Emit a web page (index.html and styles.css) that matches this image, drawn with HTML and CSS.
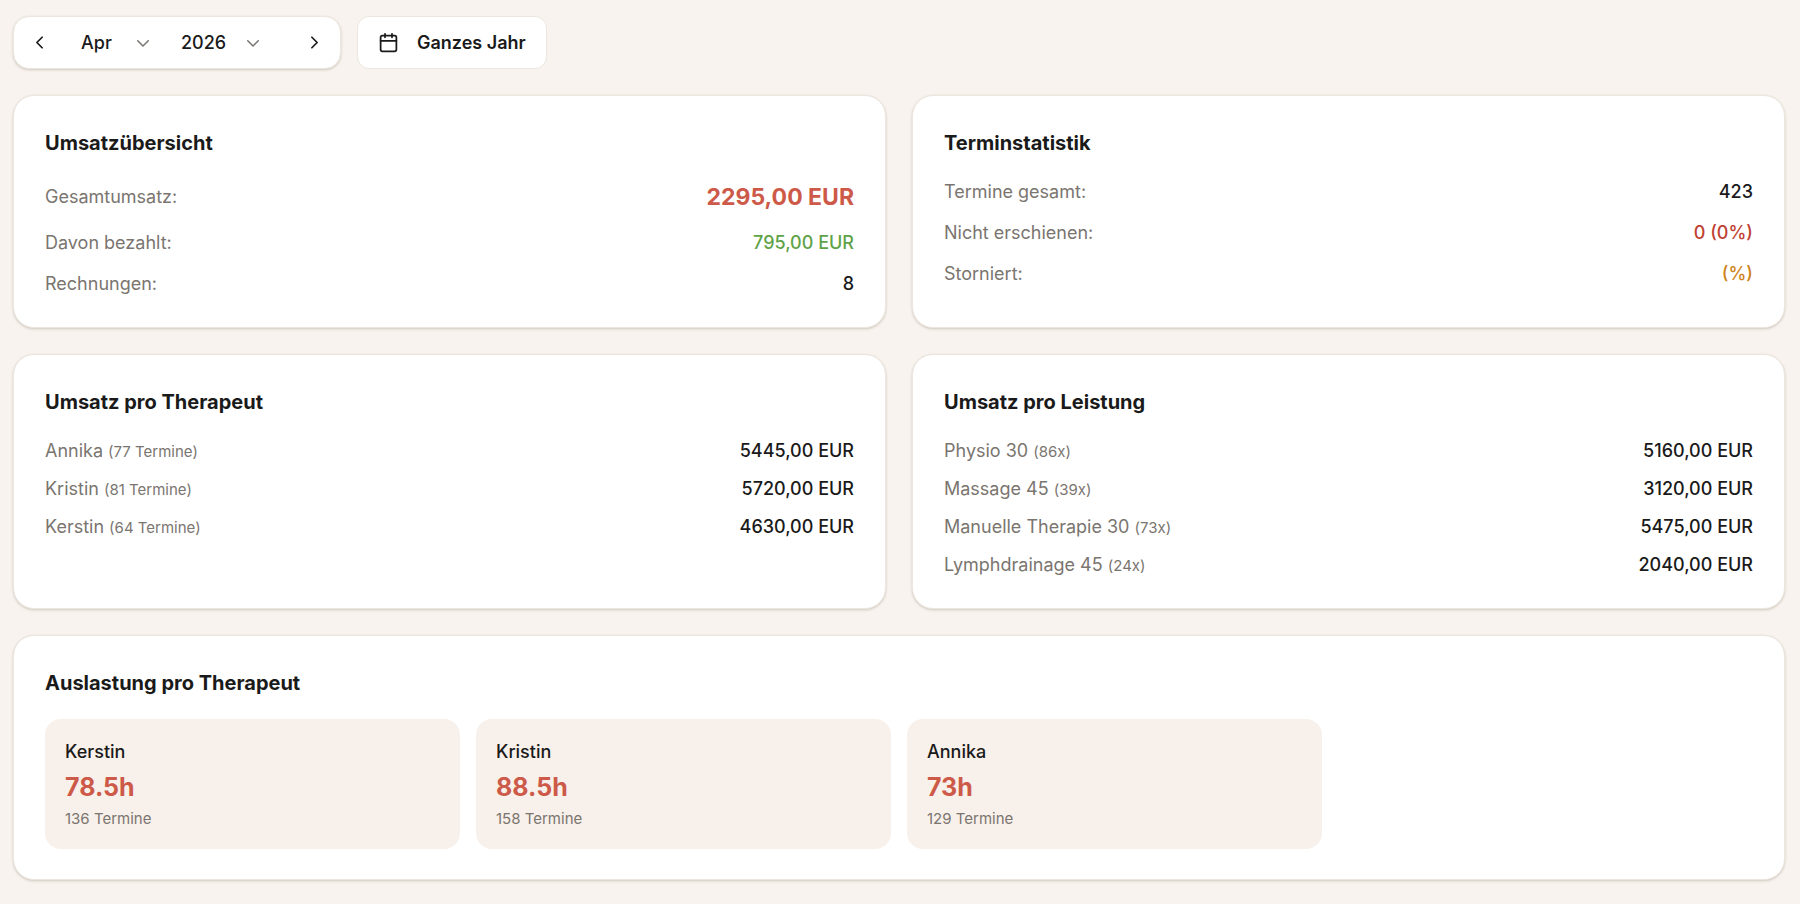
FILE: index.html
```html
<!DOCTYPE html>
<html lang="de">
<head>
<meta charset="utf-8">
<meta name="viewport" content="width=device-width, initial-scale=1">
<title>Statistik</title>
<link rel="stylesheet" href="styles.css">
</head>
<body>
<main class="page">
  <div class="toolbar">
    <div class="period">
      <button class="step" type="button" aria-label="Vorheriger Monat">
        <svg class="icon" viewBox="0 0 24 24"><path d="m15 18-6-6 6-6"/></svg>
      </button>
      <div class="picker picker-month">
        <select class="picker-select" aria-label="Monat"><option>Apr</option></select>
        <svg class="picker-arrow" viewBox="0 0 24 24"><path d="m5 9 7 7 7-7"/></svg>
      </div>
      <div class="picker picker-year">
        <select class="picker-select" aria-label="Jahr"><option>2026</option></select>
        <svg class="picker-arrow" viewBox="0 0 24 24"><path d="m5 9 7 7 7-7"/></svg>
      </div>
      <button class="step step-next" type="button" aria-label="Nächster Monat">
        <svg class="icon" viewBox="0 0 24 24"><path d="m9 18 6-6-6-6"/></svg>
      </button>
    </div>
    <button class="year-button" type="button">
      <svg class="icon" viewBox="0 0 24 24"><path d="M8 2v4M16 2v4M3 10h18"/><rect x="3" y="4" width="18" height="18" rx="2"/></svg>
      Ganzes Jahr
    </button>
  </div>

  <div class="cards">
    <section class="card">
      <h2 class="card-title">Umsatzübersicht</h2>
      <dl class="stats">
        <div class="row"><dt>Gesamtumsatz:</dt><dd class="total">2295,00 EUR</dd></div>
        <div class="row"><dt>Davon bezahlt:</dt><dd class="paid">795,00 EUR</dd></div>
        <div class="row"><dt>Rechnungen:</dt><dd>8</dd></div>
      </dl>
    </section>

    <section class="card">
      <h2 class="card-title">Terminstatistik</h2>
      <dl class="stats">
        <div class="row"><dt>Termine gesamt:</dt><dd>423</dd></div>
        <div class="row"><dt>Nicht erschienen:</dt><dd class="missed">0 (0%)</dd></div>
        <div class="row"><dt>Storniert:</dt><dd class="cancelled">(%)</dd></div>
      </dl>
    </section>

    <section class="card">
      <h2 class="card-title">Umsatz pro Therapeut</h2>
      <dl class="stats stats-dense">
        <div class="row"><dt>Annika <span class="count">(77 Termine)</span></dt><dd>5445,00 EUR</dd></div>
        <div class="row"><dt>Kristin <span class="count">(81 Termine)</span></dt><dd>5720,00 EUR</dd></div>
        <div class="row"><dt>Kerstin <span class="count">(64 Termine)</span></dt><dd>4630,00 EUR</dd></div>
      </dl>
    </section>

    <section class="card">
      <h2 class="card-title">Umsatz pro Leistung</h2>
      <dl class="stats stats-dense">
        <div class="row"><dt>Physio 30 <span class="count">(86x)</span></dt><dd>5160,00 EUR</dd></div>
        <div class="row"><dt>Massage 45 <span class="count">(39x)</span></dt><dd>3120,00 EUR</dd></div>
        <div class="row"><dt>Manuelle Therapie 30 <span class="count">(73x)</span></dt><dd>5475,00 EUR</dd></div>
        <div class="row"><dt>Lymphdrainage 45 <span class="count">(24x)</span></dt><dd>2040,00 EUR</dd></div>
      </dl>
    </section>

    <section class="card card-wide">
      <h2 class="card-title">Auslastung pro Therapeut</h2>
      <div class="tiles">
        <div class="tile"><p class="tile-name">Kerstin</p><p class="tile-hours">78.5h</p><p class="tile-count">136 Termine</p></div>
        <div class="tile"><p class="tile-name">Kristin</p><p class="tile-hours">88.5h</p><p class="tile-count">158 Termine</p></div>
        <div class="tile"><p class="tile-name">Annika</p><p class="tile-hours">73h</p><p class="tile-count">129 Termine</p></div>
      </div>
    </section>
  </div>
</main>
</body>
</html>
```

FILE: styles.css
```css
:root {
  --bg: #f8f3ee;
  --text: #1a1a1a;
  --muted: #7a756f;
  --accent: #cd5a48;
  --border: #ece6de;
  --shadow: 0 1px 3px rgba(60, 45, 30, 0.14), 0 1px 2px rgba(60, 45, 30, 0.08);
}

* {
  box-sizing: border-box;
}

body {
  margin: 0;
  background: var(--bg);
  color: var(--text);
  font-family: Inter, "Liberation Sans", sans-serif;
  font-size: 18px;
  line-height: 26px;
}

h2, p, dl, dd {
  margin: 0;
}

button, select {
  font: inherit;
  color: inherit;
}

.page {
  padding: 16px 15px 23px 13px;
}

.toolbar {
  display: flex;
  gap: 16px;
  margin-bottom: 26px;
}

.period {
  display: flex;
  align-items: center;
  gap: 5px;
  padding: 5px;
  background: #fff;
  border: 1px solid var(--border);
  border-radius: 16px;
  box-shadow: var(--shadow);
}

.icon {
  width: 21px;
  height: 21px;
  fill: none;
  stroke: currentColor;
  stroke-width: 2;
  stroke-linecap: round;
  stroke-linejoin: round;
}

.step {
  display: grid;
  place-items: center;
  width: 41px;
  height: 41px;
  padding: 0;
  background: none;
  border: 0;
  border-radius: 10px;
}

.step-next {
  margin-left: 19px;
}

.picker {
  position: relative;
}

.picker-month {
  width: 95px;
}

.picker-year {
  width: 105px;
}

.picker-select {
  appearance: none;
  width: 100%;
  height: 41px;
  padding: 0 30px 0 16px;
  background: none;
  border: 0;
  font-weight: 500;
}

.picker-arrow {
  position: absolute;
  top: 12px;
  right: 8px;
  width: 18px;
  height: 18px;
  fill: none;
  stroke: #77736f;
  stroke-width: 2;
  stroke-linecap: round;
  stroke-linejoin: round;
  pointer-events: none;
}

.year-button {
  display: flex;
  align-items: center;
  gap: 18px;
  padding: 0 20px;
  background: #fff;
  border: 1px solid var(--border);
  border-radius: 12px;
  font-weight: 600;
}

.cards {
  display: grid;
  grid-template-columns: repeat(2, 1fr);
  gap: 26px;
}

.card {
  padding: 31px 31px 30px;
  background: #fff;
  border: 1px solid var(--border);
  border-radius: 21px;
  box-shadow: var(--shadow);
}

.card-wide {
  grid-column: 1 / -1;
}

.card-title {
  margin-bottom: 20px;
  font-size: 20px;
  font-weight: 700;
  line-height: 32px;
}

.stats {
  display: flex;
  flex-direction: column;
  gap: 15px;
}

.stats-dense {
  gap: 12px;
}

.row {
  display: flex;
  align-items: center;
  justify-content: space-between;
}

.row dt {
  color: var(--muted);
}

.row dd {
  font-weight: 500;
}

.row .count {
  font-size: 15px;
  line-height: 20px;
}

.row .total {
  color: var(--accent);
  font-size: 23px;
  font-weight: 700;
  line-height: 36px;
}

.row .paid {
  color: #5fa349;
}

.row .missed {
  color: #bf4132;
}

.row .cancelled {
  color: #cf8420;
}

.tiles {
  display: grid;
  grid-template-columns: repeat(4, 1fr);
  gap: 16px;
}

.tile {
  display: flex;
  flex-direction: column;
  gap: 4px;
  padding: 20px;
  background: #f8f0ea;
  border-radius: 16px;
}

.tile-name {
  font-weight: 500;
}

.tile-hours {
  color: var(--accent);
  font-size: 25px;
  font-weight: 700;
  line-height: 36px;
}

.tile-count {
  color: var(--muted);
  font-size: 15px;
  line-height: 20px;
}
```
